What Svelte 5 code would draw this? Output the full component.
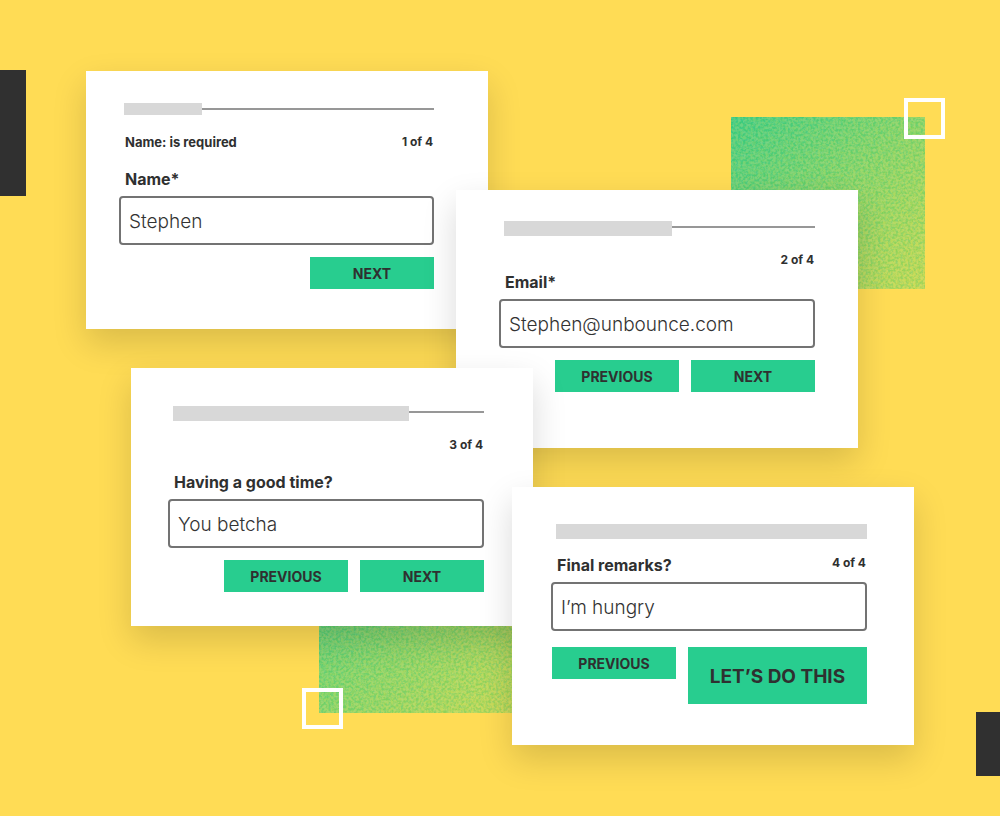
<script lang="ts">
  type Step = {
    id: string;
    label: string;
    type: 'text' | 'email';
    value: string;
    progress: number;
    error?: string;
    inline?: boolean;
    back?: boolean;
    submit?: string;
  };

  let steps = $state<Step[]>([
    {
      id: 'name',
      label: 'Name*',
      type: 'text',
      value: 'Stephen',
      progress: 25,
      error: 'Name: is required'
    },
    {
      id: 'email',
      label: 'Email*',
      type: 'email',
      value: 'Stephen@unbounce.com',
      progress: 54,
      back: true
    },
    {
      id: 'mood',
      label: 'Having a good time?',
      type: 'text',
      value: 'You betcha',
      progress: 76,
      back: true
    },
    {
      id: 'remarks',
      label: 'Final remarks?',
      type: 'text',
      value: 'I’m hungry',
      progress: 100,
      inline: true,
      back: true,
      submit: 'LET’S DO THIS'
    }
  ]);
</script>

{#snippet grain(place: string)}
  <svg class="grain {place}" viewBox="0 0 194 172" aria-hidden="true">
    <defs>
      <linearGradient id="fade-{place}" x1="0" y1="0" x2="1" y2="1">
        <stop offset="0" stop-color="#40ce85" />
        <stop offset="0.5" stop-color="#88d66a" />
        <stop offset="1" stop-color="#c6db55" />
      </linearGradient>
      <filter
        id="noise-{place}"
        x="0"
        y="0"
        width="100%"
        height="100%"
        color-interpolation-filters="sRGB"
      >
        <feTurbulence type="fractalNoise" baseFrequency="0.4" numOctaves="2" seed="4" />
        <feColorMatrix
          values="3 0 0 0 -0.9  0.4 0 0 0 0.6  0 0 0.8 0 0.05  0 0 0 0 0.18"
        />
      </filter>
    </defs>
    <rect width="194" height="172" fill="url(#fade-{place})" />
    <rect width="194" height="172" filter="url(#noise-{place})" />
  </svg>
{/snippet}

<main class="stage">
  <span class="block block-left"></span>
  <span class="block block-right"></span>
  {@render grain('upper')}
  {@render grain('lower')}
  <span class="outline outline-upper"></span>
  <span class="outline outline-lower"></span>

  {#each steps as step, index (step.id)}
    <form class="card {step.id}" onsubmit={(event) => event.preventDefault()}>
      <div
        class="progress"
        role="progressbar"
        aria-label="Form progress"
        aria-valuenow={step.progress}
        aria-valuemin="0"
        aria-valuemax="100"
      >
        <span class="fill" style:width="{step.progress}%"></span>
        <span class="line"></span>
      </div>

      <div class="meta">
        {#if step.error}<span class="error">{step.error}</span>{/if}
        {#if step.inline}<label for={step.id}>{step.label}</label>{/if}
        <span class="count">{index + 1} of {steps.length}</span>
      </div>

      {#if !step.inline}<label for={step.id}>{step.label}</label>{/if}
      <input id={step.id} type={step.type} bind:value={step.value} />

      <div class="actions">
        {#if step.back}<button type="button">PREVIOUS</button>{/if}
        {#if step.submit}
          <button class="submit" type="submit">{step.submit}</button>
        {:else}
          <button type="submit">NEXT</button>
        {/if}
      </div>
    </form>
  {/each}
</main>

<style>
  :global(body) {
    margin: 0;
    background: #ffdc55;
  }
  .stage {
    position: relative;
    display: grid;
    grid-template-columns: 86fr 45fr 325fr 32fr 24fr 21fr 325fr 56fr 86fr;
    grid-template-rows:
      minmax(119px, auto) minmax(139px, auto) 39px minmax(80px, auto)
      39px minmax(139px, auto) minmax(119px, auto);
    padding: 71px 0;
    overflow: hidden;
    background: #ffdc55;
    color: #2f3030;
    font-family: Inter, 'Open Sans', sans-serif;
  }

  .card {
    position: relative;
    display: flex;
    flex-direction: column;
    min-width: 0;
    box-sizing: border-box;
    background: #fff;
    box-shadow: 0 14px 32px rgb(0 0 0 / 15%);
  }
  .name {
    grid-area: 1 / 2 / 3 / 5;
    padding: 32px 54px 36px 33px;
  }
  .email {
    grid-area: 2 / 4 / 5 / 8;
    padding: 31px 43px 36px;
  }
  .mood {
    grid-area: 4 / 3 / 7 / 7;
    padding: 38px 49px 32px 37px;
  }
  .remarks {
    grid-area: 6 / 6 / 8 / 9;
    padding: 37px 47px 36px 39px;
  }

  .progress {
    display: flex;
    align-items: flex-start;
    height: 15px;
    margin-left: 5px;
  }
  .fill {
    height: 15px;
    background: #d8d8d8;
  }
  .name .fill {
    height: 12px;
  }
  .line {
    flex: 1;
    height: 2px;
    margin-top: 5px;
    background: #979797;
  }

  .meta {
    display: flex;
    align-items: flex-start;
    margin: 14px 1px 15px 6px;
    font-size: 12px;
    font-weight: 700;
    line-height: 20px;
  }
  .email .meta,
  .remarks .meta {
    margin-bottom: 0;
  }
  .error {
    font-size: 13px;
  }
  .count {
    margin-left: auto;
  }
  label {
    font-size: 16px;
    font-weight: 700;
    line-height: 24px;
  }
  .card > label {
    align-self: flex-start;
    margin-left: 6px;
  }
  input {
    width: 100%;
    height: 49px;
    box-sizing: border-box;
    margin: 5px 0 0;
    padding: 2px 8px 0;
    border: 2px solid #737373;
    border-radius: 4px;
    background: transparent;
    color: #333;
    font: 300 19px Inter, 'Open Sans', sans-serif;
  }

  .actions {
    display: flex;
    justify-content: flex-end;
    align-items: flex-start;
    gap: 12px;
    margin-top: 12px;
  }
  .remarks .actions {
    margin-top: 16px;
  }
  button {
    width: 124px;
    height: 32px;
    padding: 1px 0 0;
    border: 0;
    background: #28cd8f;
    color: #2f3030;
    font: 700 14px Inter, 'Open Sans', sans-serif;
    cursor: pointer;
  }
  .submit {
    width: 179px;
    height: 57px;
    font-size: 19px;
  }

  .block,
  .grain,
  .outline {
    position: absolute;
  }
  .block {
    background: #303030;
  }
  .block-left {
    top: 70px;
    left: 0;
    width: 26px;
    height: 126px;
  }
  .block-right {
    right: 0;
    bottom: 40px;
    width: 24px;
    height: 64px;
  }
  .grain {
    width: 194px;
    height: 172px;
  }
  .upper {
    top: 117px;
    right: 75px;
  }
  .lower {
    bottom: 103px;
    left: 319px;
  }
  .outline {
    z-index: 1;
    width: 41px;
    height: 41px;
    box-sizing: border-box;
    border: 4px solid #fff;
  }
  .outline-upper {
    top: 98px;
    right: 55px;
  }
  .outline-lower {
    bottom: 87px;
    left: 302px;
  }
</style>
